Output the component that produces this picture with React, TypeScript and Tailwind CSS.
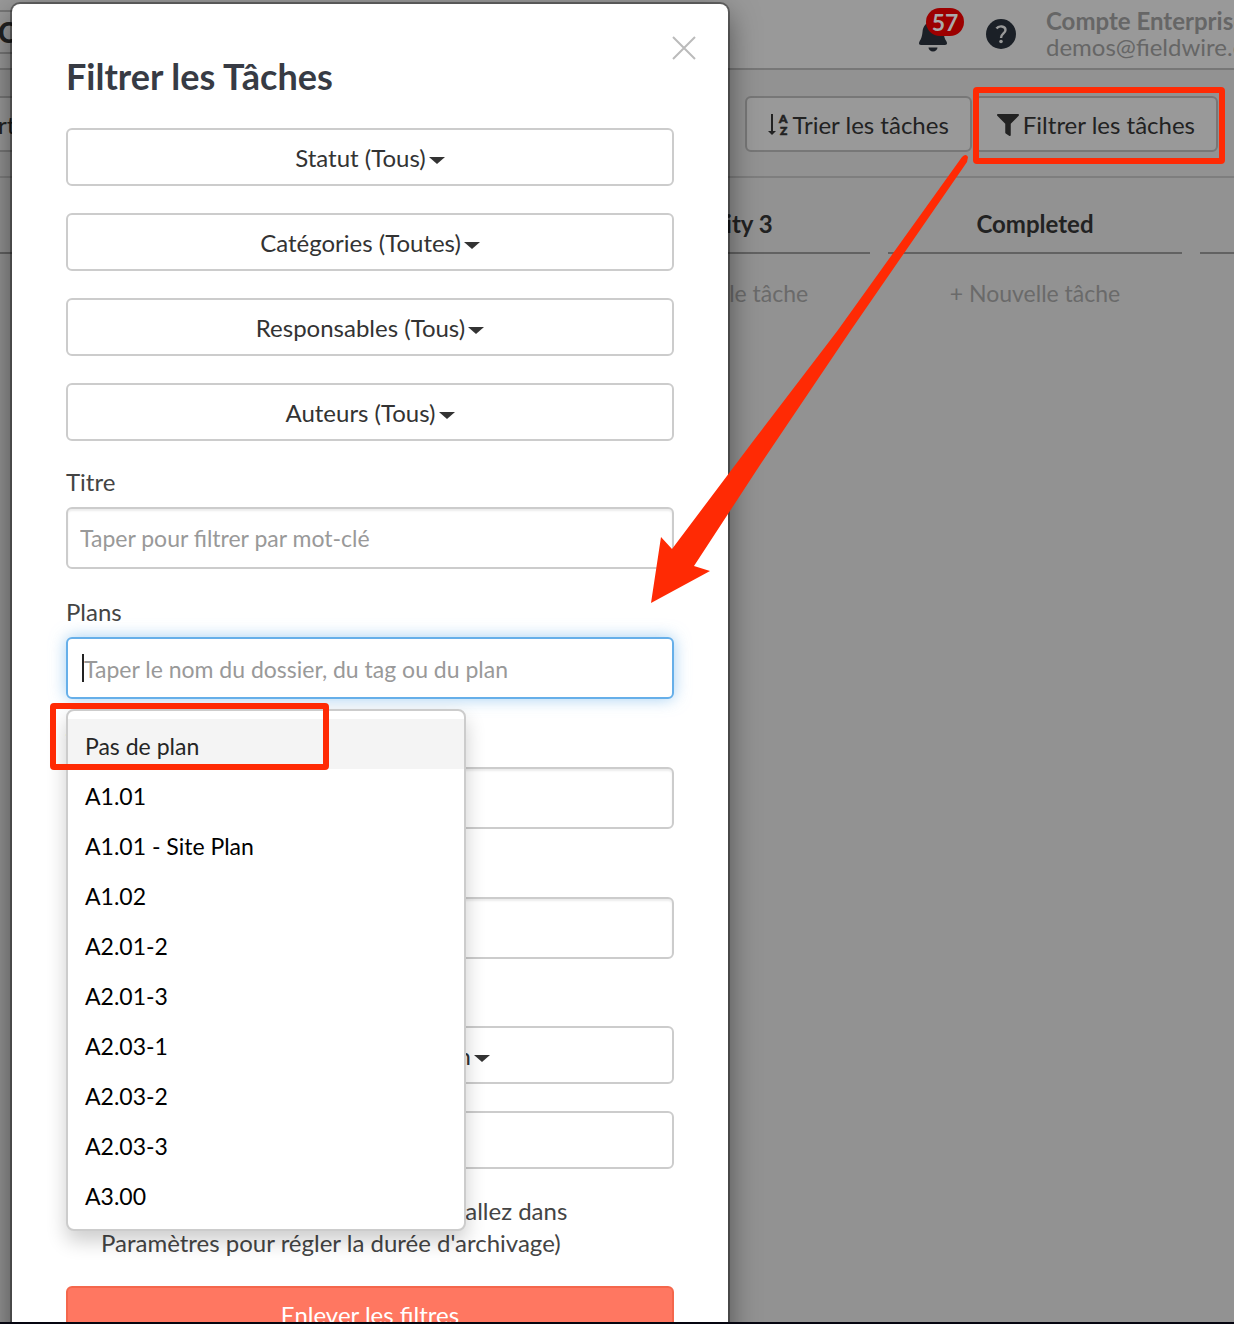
import { FaFilter } from "react-icons/fa";

const plans = [
  "Pas de plan",
  "A1.01",
  "A1.01 - Site Plan",
  "A1.02",
  "A2.01-2",
  "A2.01-3",
  "A2.03-1",
  "A2.03-2",
  "A2.03-3",
  "A3.00",
];

function Caret() {
  return <span className="mt-1 border-x-8 border-t-[7px] border-x-transparent border-t-[#333]" />;
}

function SelectButton({ label, name }: { label?: string; name?: string }) {
  return (
    <button
      type="button"
      aria-label={name}
      className="flex h-[58px] w-full items-center justify-center gap-[3px] rounded-md border-2 border-[#ccc] bg-white pt-0.5 text-[#333]"
    >
      {label}
      {label && <Caret />}
    </button>
  );
}

function FieldLabel({ id, text }: { id: string; text: string }) {
  return (
    <label htmlFor={id} className="mb-2.5 block leading-[30px]">
      {text}
    </label>
  );
}

function Field({ id, label, placeholder }: { id: string; label: string; placeholder?: string }) {
  return (
    <div>
      <FieldLabel id={id} text={label} />
      <input
        id={id}
        placeholder={placeholder}
        className="block h-[62px] w-full rounded-md border-2 border-[#ccc] bg-white px-3 text-[23px] shadow-[inset_0_2px_2px_rgba(0,0,0,0.075)] outline-none placeholder:text-[#999]"
      />
    </div>
  );
}

function PlanField() {
  return (
    <div className="relative">
      <FieldLabel id="plans" text="Plans" />
      <div className="flex h-[62px] items-center rounded-md border-2 border-[#66afe9] bg-white px-3.5 shadow-[0_0_16px_rgba(102,175,233,0.6)]">
        <span className="h-7 w-0.5 bg-[#222]" />
        <input
          id="plans"
          placeholder="Taper le nom du dossier, du tag ou du plan"
          className="h-full min-w-0 flex-1 bg-transparent pt-0.5 text-[23px] outline-none placeholder:text-[#999]"
        />
      </div>
      <ul className="absolute top-full left-0 z-10 mt-2.5 w-[400px] rounded-lg border-2 border-[#ccc] bg-white pt-2 pb-2.5 text-[23px] text-black shadow-[0_10px_20px_rgba(0,0,0,0.2)]">
        {plans.map((plan, i) => (
          <li key={plan} className={i === 0 ? "bg-[#f4f4f4] text-[#262626]" : ""}>
            <button type="button" className="block h-[50px] w-full px-[17px] pt-1 text-left">
              {plan}
            </button>
          </li>
        ))}
      </ul>
      <div className="pointer-events-none absolute top-full -left-4 z-20 mt-1 h-[67px] w-[279px] rounded-sm border-6 border-[#ff2a04]" />
    </div>
  );
}

function FilterDialog() {
  return (
    <section
      role="dialog"
      aria-label="Filtrer les Tâches"
      className="absolute top-1 left-3 w-[716px] rounded-t-lg bg-white px-[54px] pt-12 pb-12 text-[#444] shadow-[0_0_0_2px_rgba(0,0,0,0.35),0_10px_30px_rgba(0,0,0,0.5)]"
    >
      <button type="button" aria-label="Fermer" className="absolute top-8 right-8 text-[#bbb]">
        <svg viewBox="0 0 24 24" className="size-6" stroke="currentColor" strokeWidth="2">
          <path d="M1 1 23 23M23 1 1 23" />
        </svg>
      </button>
      <h1 className="mb-7 text-4xl leading-12 font-bold text-[#373b44]">Filtrer les Tâches</h1>
      <div className="flex flex-col gap-[27px]">
        <SelectButton label="Statut (Tous)" />
        <SelectButton label="Catégories (Toutes)" />
        <SelectButton label="Responsables (Tous)" />
        <SelectButton label="Auteurs (Tous)" />
      </div>
      <div className="mt-[26px] flex flex-col gap-7">
        <Field id="titre" label="Titre" placeholder="Taper pour filtrer par mot-clé" />
        <PlanField />
        <Field id="tags" label="Tags" />
        <Field id="reference" label="Référence" />
      </div>
      <div className="mt-[67px] flex flex-col gap-[27px]">
        <SelectButton label="Date de modification" />
        <SelectButton name="Période" />
      </div>
      <label className="mt-[26px] flex items-start gap-[15px] leading-8">
        <input type="checkbox" className="mt-2 size-5 shrink-0" />
        <span>
          Afficher les tâches (déjà archivées, allez dans
          <br />
          Paramètres pour régler la durée d'archivage)
        </span>
      </label>
      <button
        type="button"
        className="mt-[27px] h-[58px] w-full rounded-md border-2 border-[#f4674c] bg-[#ff7761] text-white"
      >
        Enlever les filtres
      </button>
    </section>
  );
}

function Column({ title }: { title: string }) {
  return (
    <section className="w-[294px] shrink-0 text-center">
      <h2 className="h-[76px] border-b-2 border-[#626262] pt-[30px] font-bold text-[#222]">{title}</h2>
      <button type="button" className="mt-6 text-[23px] leading-[30px] text-[#6a6a6a]">
        + Nouvelle tâche
      </button>
    </section>
  );
}

export default function App() {
  return (
    <div className="relative h-screen overflow-hidden border-b-2 border-[#050510] bg-[#929292] font-['Lato',sans-serif] text-2xl leading-8">
      <header className="flex h-[70px] items-center border-b-2 border-[#777] bg-[#999]">
        <div className="mb-1 -ml-0.5 h-11 w-40 border-y-2 border-[#777] text-[28px] leading-10 font-black text-[#222]">
          C
        </div>
        <div className="ml-auto flex shrink-0 items-center">
          <button type="button" aria-label="Notifications" className="relative mr-[39px] h-10 w-7 text-[#1b2027]">
            <svg viewBox="0 0 28 36" className="h-9 w-7" fill="currentColor">
              <path d="M14 5C7 6 4 10 3.500 16 3 21 2 23 .5 25.500 -.5 27.500 0 29 2 29h24c2 0 2.500-1.500 1.500-3.500C26 23 25 21 24.500 16 24 10 21 6 14 5ZM9.500 31.500h9a4.500 4 0 0 1-9 0Z" />
            </svg>
            <span className="absolute -top-1.5 left-[7px] h-7 w-[38px] rounded-full bg-[#9c0000] text-center text-[23px] leading-7 font-bold text-[#aaa]">
              57
            </span>
          </button>
          <button type="button" aria-label="Aide" className="mr-[30px] rounded-full bg-[#1b2027] text-[#999]">
            <svg viewBox="0 0 30 30" className="size-[30px]" fill="none" stroke="currentColor" strokeWidth="2.400">
              <path d="M10.500 9.500C12.500 6.500 19.500 6.500 19.500 11c0 3.500-4.500 3.500-4.500 8" />
              <circle cx="15" cy="22.500" r="1.800" fill="currentColor" stroke="none" />
            </svg>
          </button>
          <div className="w-[188px] leading-[26px] whitespace-nowrap text-[#666]">
            <p className="font-bold">Compte Enterprise</p>
            <p>demos@fieldwire.com</p>
          </div>
        </div>
      </header>
      <div className="flex h-[108px] items-center gap-0.5 border-b-2 border-[#7e7e7e] pt-0.5 pr-4 text-[#222]">
        <button type="button" className="-ml-0.5 h-14 w-20 border-y-2 border-[#777] bg-[#999] pt-0.5 text-left">
          rt
        </button>
        <button
          type="button"
          className="ml-auto flex h-14 items-center gap-0.5 rounded-md border-2 border-[#777] bg-[#999] px-[21px] pt-0.5"
        >
          <svg viewBox="0 0 22 24" className="h-6 w-[22px]" fill="currentColor">
            <path d="M3 1h2v17h3l-4 4-4-4h3Z" />
            <g className="text-[12px] font-black" stroke="currentColor" strokeWidth="0.600">
              <text x="11" y="10">
                A
              </text>
              <text x="12" y="22">
                Z
              </text>
            </g>
          </svg>
          Trier les tâches
        </button>
        <div className="relative">
          <button
            type="button"
            className="flex h-14 items-center gap-1 rounded-md border-2 border-[#777] bg-[#999] px-[21px] pt-0.5"
          >
            <FaFilter className="size-[22px]" />
            Filtrer les tâches
          </button>
          <div className="pointer-events-none absolute -top-[9px] -right-[7px] -bottom-3 -left-px rounded-sm border-6 border-[#ff2a04]" />
        </div>
      </div>
      <main className="flex justify-end gap-[18px]">
        <Column title="Priority 1" />
        <Column title="Priority 2" />
        <Column title="Priority 3" />
        <Column title="Completed" />
        <div className="h-[76px] w-[34px] shrink-0 border-b-2 border-[#626262]" />
      </main>
      <FilterDialog />
      <svg className="pointer-events-none absolute top-0 left-0 z-30 h-[620px] w-[1000px]" viewBox="0 0 1000 620">
        <path
          d="M651 603 661 537 672 549 754 440 838 330 962 157Q966 153 968 157L967 162 851 330 760 465 694 566 710 571Z"
          fill="#ff2a04"
        />
      </svg>
    </div>
  );
}
